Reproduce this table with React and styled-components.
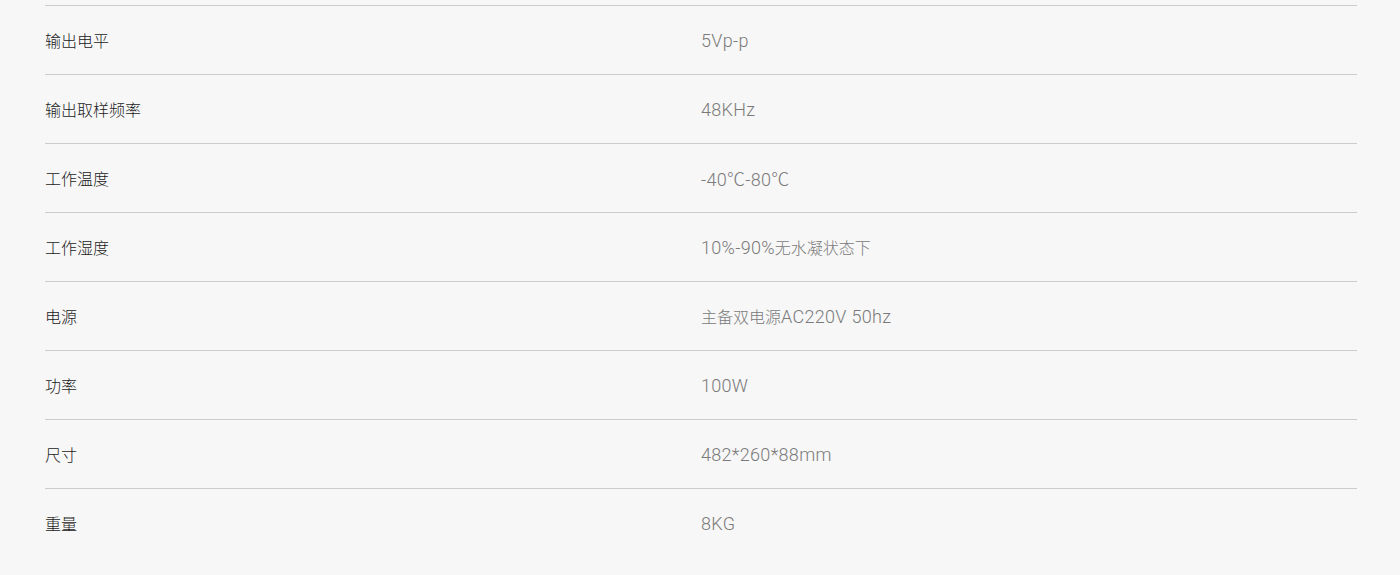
import React from 'react'
import styled, { createGlobalStyle } from 'styled-components'

const GlobalStyle = createGlobalStyle`
    html, body {
        margin: 0;
        padding: 0;
        background-color: #f7f7f7;
    }
    body {
        font-family: "Noto Sans", "Noto Sans CJK SC", sans-serif;
    }
`

const Page = styled.div`
    background-color: #f7f7f7;
    min-height: 575px;
    padding: 5px 43px 0 45px;
    box-sizing: border-box;
`

const SpecList = styled.div`
    display: flex;
    flex-direction: column;
`

const SpecRow = styled.div`
    display: grid;
    grid-template-columns: 1fr 1fr;
    align-items: center;
    height: 68px;
    border-top: 1px solid #cccccc;
`

const Label = styled.span`
    font-size: 16px;
    font-weight: 300;
    color: #1a1a1a;
    font-family: "Noto Sans CJK SC", sans-serif;
`

const Value = styled.span`
    font-size: 18px;
    font-weight: 300;
    letter-spacing: 0.3px;
    color: #7a7a7a;
    font-family: Roboto, "Noto Sans CJK SC", sans-serif;
`

// chinese runs inside a value are set smaller than the latin digits
const Han = styled.span`
    font-size: 16px;
    letter-spacing: 0;
    font-family: "Noto Sans CJK SC", sans-serif;
`

const specs = [
  ['输出电平', '5Vp-p'],
  ['输出取样频率', '48KHz'],
  ['工作温度', '-40℃-80℃'],
  ['工作湿度', '10%-90%无水凝状态下'],
  ['电源', '主备双电源AC220V 50hz'],
  ['功率', '100W'],
  ['尺寸', '482*260*88mm'],
  ['重量', '8KG'],
]

const renderValue = (text) =>
  text.split(/([\u4e00-\u9fff]+)/).filter(Boolean).map((part, i) =>
    /[\u4e00-\u9fff]/.test(part) ? <Han key={i}>{part}</Han> : part
  )

const App = () => {
  return (
    <Page>
        <GlobalStyle />
        <SpecList>
            {specs.map(([label, value]) => (
                <SpecRow key={label}>
                    <Label>{label}</Label>
                    <Value>{renderValue(value)}</Value>
                </SpecRow>
            ))}
        </SpecList>
    </Page>
  )
}

export default App
